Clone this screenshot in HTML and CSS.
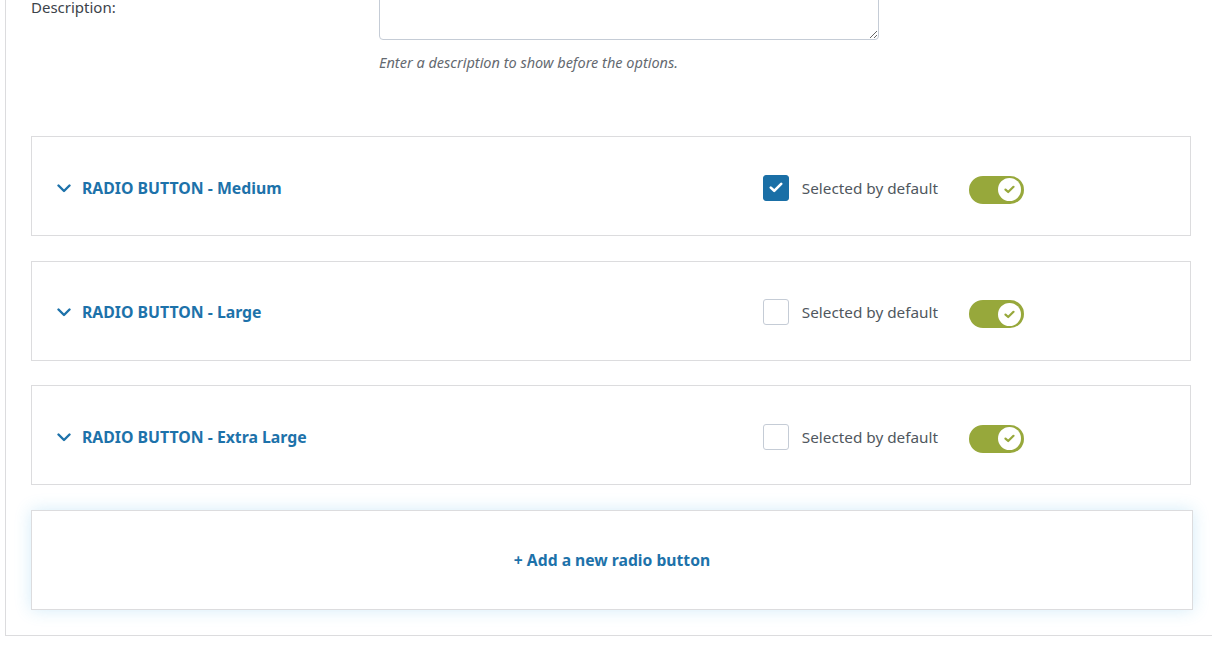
FILE: index.html
```html
<!DOCTYPE html>
<html lang="en">
<head>
<meta charset="utf-8">
<title>Radio buttons</title>
<link rel="stylesheet" href="styles.css">
</head>
<body>
<div class="panel">
  <div class="field">
    <label class="field-label" for="desc">Description:</label>
    <div class="field-control">
      <textarea id="desc" class="desc-input"></textarea>
      <p class="hint">Enter a description to show before the options.</p>
    </div>
  </div>

  <div class="options">
    <div class="option">
      <div class="option-title">
        <svg class="chevron" width="14" height="9" viewBox="0 0 14 9"><path d="M1.5 1.5 L7 7 L12.5 1.5" fill="none" stroke="currentColor" stroke-width="2.4" stroke-linecap="round" stroke-linejoin="round"/></svg>
        <span>RADIO BUTTON - Medium</span>
      </div>
      <label class="default-check">
        <span class="box checked"><svg width="14" height="11" viewBox="0 0 14 11"><path d="M1.8 5.6 L5.2 8.8 L12.2 1.8" fill="none" stroke="#fff" stroke-width="2.6" stroke-linecap="round" stroke-linejoin="round"/></svg></span>
        <span class="check-text">Selected by default</span>
      </label>
      <span class="toggle"><span class="knob"><svg width="11" height="9" viewBox="0 0 11 9"><path d="M1.5 4.6 L4.2 7 L9.5 1.8" fill="none" stroke="#97a83b" stroke-width="2.2" stroke-linecap="round" stroke-linejoin="round"/></svg></span></span>
    </div>

    <div class="option">
      <div class="option-title">
        <svg class="chevron" width="14" height="9" viewBox="0 0 14 9"><path d="M1.5 1.5 L7 7 L12.5 1.5" fill="none" stroke="currentColor" stroke-width="2.4" stroke-linecap="round" stroke-linejoin="round"/></svg>
        <span>RADIO BUTTON - Large</span>
      </div>
      <label class="default-check">
        <span class="box"></span>
        <span class="check-text">Selected by default</span>
      </label>
      <span class="toggle"><span class="knob"><svg width="11" height="9" viewBox="0 0 11 9"><path d="M1.5 4.6 L4.2 7 L9.5 1.8" fill="none" stroke="#97a83b" stroke-width="2.2" stroke-linecap="round" stroke-linejoin="round"/></svg></span></span>
    </div>

    <div class="option">
      <div class="option-title">
        <svg class="chevron" width="14" height="9" viewBox="0 0 14 9"><path d="M1.5 1.5 L7 7 L12.5 1.5" fill="none" stroke="currentColor" stroke-width="2.4" stroke-linecap="round" stroke-linejoin="round"/></svg>
        <span>RADIO BUTTON - Extra Large</span>
      </div>
      <label class="default-check">
        <span class="box"></span>
        <span class="check-text">Selected by default</span>
      </label>
      <span class="toggle"><span class="knob"><svg width="11" height="9" viewBox="0 0 11 9"><path d="M1.5 4.6 L4.2 7 L9.5 1.8" fill="none" stroke="#97a83b" stroke-width="2.2" stroke-linecap="round" stroke-linejoin="round"/></svg></span></span>
    </div>

    <div class="add-option">+ Add a new radio button</div>
  </div>
</div>
</body>
</html>
```

FILE: styles.css
```css
html, body {
  margin: 0;
  padding: 0;
  background: #fff;
  overflow: hidden;
}

body {
  font-family: "Noto Sans", "Open Sans", "Liberation Sans", sans-serif;
  font-size: 15px;
  color: #3c434a;
}

.panel {
  margin-left: 5px;
  margin-top: -24px;
  border-left: 1px solid #dcdcde;
  border-bottom: 1px solid #dcdcde;
  padding: 0 0 25px 25px;
}

.field {
  display: flex;
}

.field-label {
  width: 348px;
  padding-top: 23px;
  line-height: 16px;
}

.field-control {
  display: flex;
  flex-direction: column;
}

.desc-input {
  display: block;
  box-sizing: border-box;
  width: 500px;
  height: 64px;
  margin: 0;
  border: 1px solid #c5ccd6;
  border-radius: 4px;
  background: #fff;
  font: inherit;
  resize: vertical;
}

.hint {
  margin: 12px 0 0;
  font-size: 14.5px;
  line-height: 20px;
  font-style: italic;
  color: #646970;
}

.options {
  margin-top: 64px;
  width: 1162px;
  display: flex;
  flex-direction: column;
  gap: 24.7px;
}

.option {
  box-sizing: border-box;
  width: 1160px;
  height: 100px;
  border: 1px solid #dcdcde;
  display: flex;
  align-items: center;
  padding: 3px 166px 0 25px;
}

.option-title {
  flex: 1;
  display: flex;
  align-items: center;
  gap: 11px;
  color: #1d72aa;
  font-weight: 700;
  font-size: 15.8px;
}

.chevron {
  color: #1d72aa;
  margin-top: 1px;
}

.default-check {
  display: flex;
  align-items: center;
  gap: 13px;
}

.box {
  box-sizing: border-box;
  width: 26px;
  height: 26px;
  border: 1px solid #c5ccd6;
  border-radius: 3px;
  background: #fff;
  display: flex;
  align-items: center;
  justify-content: center;
}

.box.checked {
  background: #1a6fa6;
  border-color: #1a6fa6;
}

.check-text {
  color: #50575e;
  font-size: 15.3px;
}

.toggle {
  margin-left: 31px;
  margin-top: 4px;
  width: 55px;
  height: 28px;
  border-radius: 14px;
  background: #97a83b;
  display: flex;
  align-items: center;
  justify-content: flex-end;
  padding-right: 3px;
  box-sizing: border-box;
}

.knob {
  width: 23px;
  height: 23px;
  border-radius: 50%;
  background: #fff;
  display: flex;
  align-items: center;
  justify-content: center;
}

.add-option {
  box-sizing: border-box;
  width: 1162px;
  height: 100px;
  border: 1px solid #dcdcde;
  background: #fff;
  box-shadow: 0 0 16px rgba(40, 160, 225, 0.2);
  display: flex;
  align-items: center;
  justify-content: center;
  color: #1d72aa;
  font-weight: 700;
  font-size: 15.7px;
}
```
